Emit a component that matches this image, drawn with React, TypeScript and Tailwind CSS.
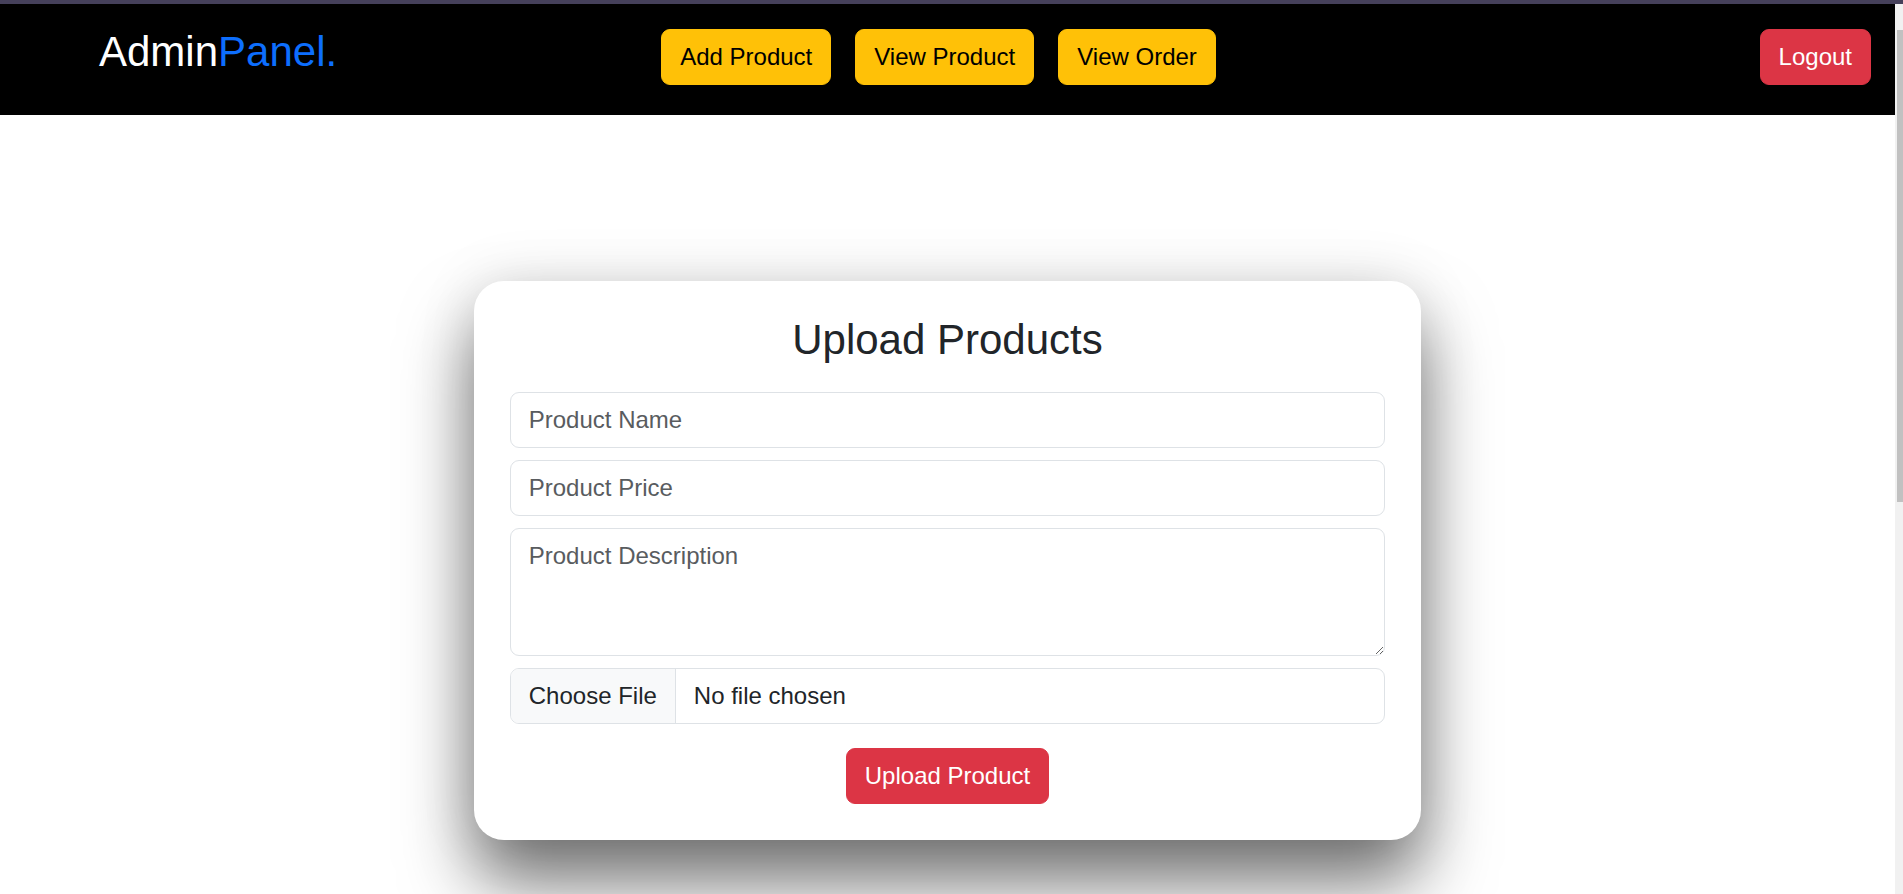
import React from 'react'

const navLinks = ['Add Product', 'View Product', 'View Order']

function Navbar() {
  return (
    <nav className="h-[111px] shrink-0 bg-black flex items-start pl-[99px] pr-[24px]">
      <a href="#" className="mt-[23px] text-[42px] leading-[50px] text-white">
        Admin<span className="text-[#0d6efd]">Panel.</span>
      </a>
      <div className="mt-[25px] ml-[324px] flex gap-[24px]">
        {navLinks.map((label) => (
          <button
            key={label}
            className="px-[18px] py-[9px] border border-[#ffc107] bg-[#ffc107] text-black text-[24px] leading-[36px] rounded-[9px]"
          >
            {label}
          </button>
        ))}
      </div>
      <button className="mt-[25px] ml-auto px-[18px] py-[9px] border border-[#dc3545] bg-[#dc3545] text-white text-[24px] leading-[36px] rounded-[9px]">
        Logout
      </button>
    </nav>
  )
}

function UploadForm() {
  const field =
    'w-full px-[18px] py-[9px] border border-[#dee2e6] rounded-[9px] text-[24px] leading-[36px] text-[#212529] placeholder:text-[#595c5f] outline-none bg-white'

  return (
    <div className="w-1/2 bg-white rounded-[30px] pt-[34px] px-[36px] pb-[36px] shadow-[0_42px_70px_rgba(0,0,0,0.55),0_0_60px_rgba(0,0,0,0.1)]">
      <h3 className="text-center text-[42px] leading-[50px] text-[#212529] mb-[27px]">Upload Products</h3>
      <form className="flex flex-col gap-[12px]" onSubmit={(e) => e.preventDefault()}>
        <input type="text" placeholder="Product Name" className={field} />
        <input type="text" placeholder="Product Price" className={field} />
        <textarea rows={3} placeholder="Product Description" className={field + ' block'} />
        <label className="flex w-full border border-[#dee2e6] rounded-[9px] overflow-hidden text-[24px] leading-[36px] text-[#212529] cursor-pointer">
          <span className="px-[18px] py-[9px] bg-[#f8f9fa] border-r border-[#dee2e6]">Choose File</span>
          <span className="px-[18px] py-[9px]">No file chosen</span>
          <input type="file" className="hidden" />
        </label>
        <div className="flex justify-center mt-[12px]">
          <button className="px-[18px] py-[9px] border border-[#dc3545] bg-[#dc3545] text-white text-[24px] leading-[36px] rounded-[9px]">
            Upload Product
          </button>
        </div>
      </form>
    </div>
  )
}

export default function App() {
  return (
    <div className="h-[894px] overflow-hidden flex flex-col bg-white" style={{ fontFamily: '"Liberation Sans", Arial, sans-serif' }}>
      <div className="h-[4px] bg-[#45405a] shrink-0" />
      <div className="flex flex-1 min-h-0">
        <div className="flex-1 min-w-0 flex flex-col">
          <Navbar />
          <main className="h-[890px] shrink-0 flex items-center justify-center">
            <UploadForm />
          </main>
        </div>
        {/* fake browser scrollbar */}
        <div className="w-[8px] bg-[#f1f1f1] flex flex-col">
          <div className="h-[26px]" />
          <div className="h-[472px] ml-[2px] bg-[#c1c1c1]" />
        </div>
      </div>
    </div>
  )
}
